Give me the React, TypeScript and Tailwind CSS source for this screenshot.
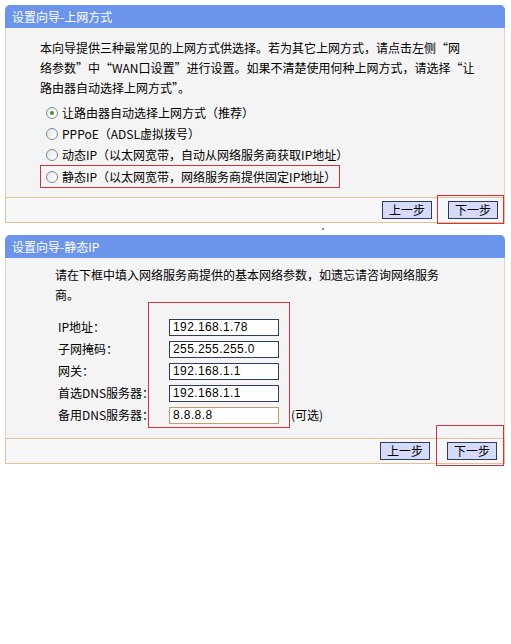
import React from "react";

const font = { fontFamily: '"Noto Sans CJK SC", "Noto Sans", sans-serif' };

function Radio({ checked }: { checked?: boolean }) {
  return (
    <span className="flex h-[12px] w-[12px] shrink-0 items-center justify-center rounded-full border border-[#7b8a9e] bg-gradient-to-br from-[#e6e6e0] to-white">
      {checked && <span className="h-[4px] w-[4px] rounded-full bg-[#3d9b35]" />}
    </span>
  );
}

function StepButton({ label }: { label: string }) {
  return (
    <button
      type="button"
      className="flex h-[18px] w-[50px] items-center justify-center border border-[#2e3b5e] bg-[#d5dbf8] text-[12px] leading-none text-black"
    >
      {label}
    </button>
  );
}

function Header({ title }: { title: string }) {
  return (
    <div className="flex h-[23px] items-center rounded-t-[5px] bg-[#6b95ea] pl-[7px] text-[12px] text-white">
      {title}
    </div>
  );
}

const options = [
  "让路由器自动选择上网方式（推荐）",
  "PPPoE（ADSL虚拟拨号）",
  "动态IP（以太网宽带，自动从网络服务商获取IP地址）",
];

const fields = [
  { label: "IP地址：", value: "192.168.1.78" },
  { label: "子网掩码：", value: "255.255.255.0" },
  { label: "网关：", value: "192.168.1.1" },
  { label: "首选DNS服务器：", value: "192.168.1.1" },
  { label: "备用DNS服务器：", value: "8.8.8.8", optional: true },
];

export default function App() {
  return (
    <div className="h-[644px] w-[511px] bg-white pl-[5px] pt-[5px] text-black" style={font}>
      {/* 上网方式 */}
      <div className="w-[500px]">
        <Header title="设置向导-上网方式" />
        <div className="h-[169px] border-x border-[#efd2b0] bg-[#f4f4f4] pl-[34px] pt-[10px] text-[12px]">
          <p className="leading-[20px]">
            本向导提供三种最常见的上网方式供选择。若为其它上网方式，请点击左侧“网
            <br />
            络参数”中“WAN口设置”进行设置。如果不清楚使用何种上网方式，请选择“让
            <br />
            路由器自动选择上网方式”。
          </p>
          <div className="mt-[4px] flex flex-col">
            {options.map((o, i) => (
              <div key={o} className="flex h-[21px] items-center gap-[4px] pl-[6px]">
                <Radio checked={i === 0} />
                <span>{o}</span>
              </div>
            ))}
            <div className="flex h-[23px] w-[300px] items-center gap-[4px] border border-[#d2343c] pl-[5px]">
              <Radio />
              <span>静态IP（以太网宽带，网络服务商提供固定IP地址）</span>
            </div>
          </div>
        </div>
        <div className="relative flex h-[26px] items-center justify-end gap-[16px] border border-[#e4c096] bg-[#f7f7f7] pr-[6px]">
          <StepButton label="上一步" />
          <StepButton label="下一步" />
          <div className="absolute right-0 top-[-3px] h-[29px] w-[67px] border border-[#d2343c]" />
        </div>
      </div>

      <div className="flex h-[12px] items-center pl-[317px]">
        <span className="h-[2px] w-[2px] bg-[#8a8a8a]" />
      </div>

      {/* 静态IP */}
      <div className="w-[500px]">
        <Header title="设置向导-静态IP" />
        <div className="relative h-[180px] border-x border-[#efd2b0] bg-[#f4f4f4] pl-[49px] pt-[7px] text-[12px]">
          <p className="leading-[20px]">
            请在下框中填入网络服务商提供的基本网络参数，如遗忘请咨询网络服务
            <br />
            商。
          </p>
          <div className="mt-[11px] flex flex-col pl-[3px]">
            {fields.map((f) => (
              <div key={f.label} className="flex h-[22px] items-center">
                <span className="w-[111px]">{f.label}</span>
                <span
                  className={`flex h-[17px] w-[110px] items-center bg-white pl-[3px] text-[12px] tracking-[0.4px] ${
                    f.optional ? "border border-[#c99a68]" : "border border-[#2d3f5c]"
                  }`}
                  style={{ fontFamily: '"Liberation Sans", sans-serif' }}
                >
                  {f.value}
                </span>
                {f.optional && <span className="ml-[12px]">(可选)</span>}
              </div>
            ))}
          </div>
          <div className="absolute left-[142px] top-[44px] h-[126px] w-[142px] border border-[#d2343c]" />
        </div>
        <div className="relative flex h-[26px] items-center justify-end gap-[17px] border border-[#e4c096] bg-[#f7f7f7] pr-[7px]">
          <StepButton label="上一步" />
          <StepButton label="下一步" />
          <div className="absolute right-0 top-[-14px] h-[41px] w-[68px] border border-[#d2343c]" />
        </div>
      </div>
    </div>
  );
}
